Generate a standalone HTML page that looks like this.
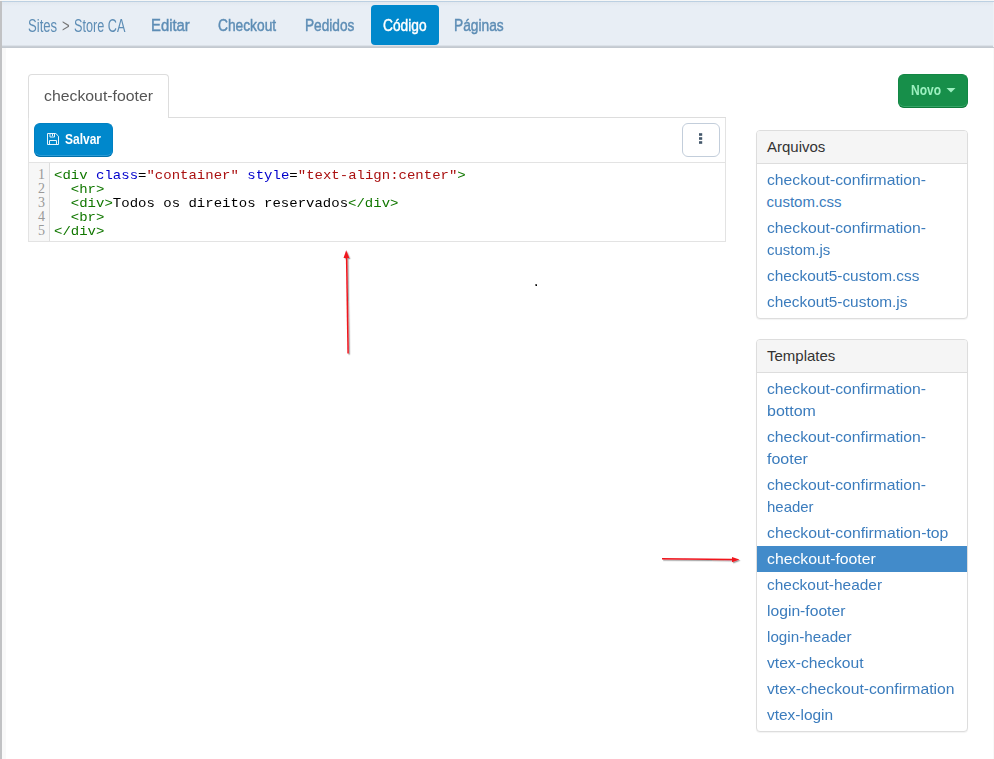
<!DOCTYPE html>
<html><head><meta charset="utf-8">
<style>
*{box-sizing:border-box;margin:0;padding:0}
html,body{width:994px;height:759px;overflow:hidden;background:#fff;font-family:"Liberation Sans",sans-serif;}
body{position:relative}
.abs{position:absolute}
#strip{left:0;top:1px;width:2px;height:758px;background:#c1c2c4}
#strip2{left:2px;top:1px;width:4px;height:758px;background:rgba(0,0,0,.022)}
#toprow{left:0;top:0;width:994px;height:1px;background:#f6f7f7}
#nav{left:2px;top:1px;width:992px;height:47px;background:linear-gradient(to bottom,#bcd0e2 0,#bcd0e2 1px,#e2e8ef 1px,#e8eef5 5px,#e8eef5 44px,#dbe1e8 44px,#dbe1e8 45px,#c8ced5 45px,#c8ced5 46px,#c3c9d0 46px)}
.ni{position:absolute;top:17px;font-size:17.5px;line-height:18px;color:#5d8db5;white-space:nowrap;transform-origin:0 50%;transform:scaleX(.78)}
.nb{-webkit-text-stroke:.45px currentColor;transform:scaleX(.80);font-size:16.8px;top:17.3px}
#pill{left:371px;top:5px;width:68px;height:40px;background:#0088cc;border-radius:4px}
.sx{display:inline-block;white-space:nowrap;transform-origin:0 50%}
#tab{left:28px;top:74px;width:141px;height:44px;border:1px solid #ddd;border-bottom:none;border-radius:4px 4px 0 0;background:#fff}
#tabline{left:168px;top:117px;width:558px;height:1px;background:#ddd}
#tabtxt{left:44px;top:87px;font-size:15px;line-height:18px;color:#555;transform-origin:0 50%;transform:scaleX(1.054);white-space:nowrap}
#panel{left:28px;top:118px;width:698px;height:124px;border:1px solid #e3e3e3;border-top:none}
#tbline{left:29px;top:162px;width:696px;height:1px;background:#e3e3e3}
#salvar{left:34px;top:123px;width:79px;height:34px;background:#0088cc;border-radius:6px;border:1px solid #0080c2;border-bottom:1px solid #0070aa;box-shadow:inset 0 -1px 0 #2a9ad6}
#dots{left:682px;top:123px;width:38px;height:34px;border:1px solid #c3cedb;border-radius:6px;background:#fff}
#gutter{left:29px;top:163px;width:21px;height:78px;background:#f7f7f7;border-right:1px solid #ddd}
.ln{position:absolute;left:28px;width:17px;text-align:right;font-size:14px;line-height:14px;color:#999;font-family:"Liberation Serif",serif}
.cl{position:absolute;left:54px;font-family:"Liberation Mono",monospace;font-size:13px;line-height:14px;white-space:pre;color:#000;transform-origin:0 50%;transform:scaleX(1.0769)}
.t{color:#170}.a{color:#00c}.s{color:#a11}
#novo{left:898px;top:74px;width:70px;height:34px;background:#178f4a;border-radius:6px;border:1px solid #138745;border-bottom:1px solid #0f7a3b;box-shadow:inset 0 -1px 0 #35a566}
.pnl{position:absolute;left:756px;width:212px;border:1px solid #ddd;border-radius:4px;background:#fff;box-shadow:0 1px 1px rgba(0,0,0,.05)}
.ph{height:33px;background:#f5f5f5;border-bottom:1px solid #ddd;border-radius:3px 3px 0 0;font-size:15px;line-height:31px;padding-left:10px;color:#333}
.li{position:absolute;left:766.6px;font-size:15px;line-height:22px;color:#3b7cbd;white-space:nowrap;transform-origin:0 50%;transform:scaleX(1.052)}
#sel{left:757px;top:546px;width:210px;height:26px;background:#428bca}
</style></head><body>
<div id="toprow" class="abs"></div><div id="strip" class="abs"></div><div id="strip2" class="abs"></div>
<div id="nav" class="abs"></div>
<div id="pill" class="abs"></div>
<div class="ni" style="left:28px;transform:scaleX(.75)">Sites</div>
<div class="ni" style="left:61.5px;transform:scaleX(.75);color:#777">&gt;</div>
<div class="ni" style="left:74.3px;transform:scaleX(.725)">Store CA</div>
<div class="ni nb" style="left:151.2px;transform:scaleX(.885)">Editar</div>
<div class="ni nb" style="left:218px;transform:scaleX(.82)">Checkout</div>
<div class="ni nb" style="left:304.8px;transform:scaleX(.815)">Pedidos</div>
<div class="ni nb" style="left:383px;color:#fff;transform:scaleX(.82)">Código</div>
<div class="ni nb" style="left:454.3px;transform:scaleX(.82)">Páginas</div>

<div id="tab" class="abs"></div><div id="tabline" class="abs"></div>
<div id="tabtxt" class="abs">checkout-footer</div>
<div id="panel" class="abs"></div><div id="tbline" class="abs"></div>
<div id="salvar" class="abs"></div>
<div class="abs" style="left:64.7px;top:129.8px;font-size:15px;line-height:18px;font-weight:bold;color:#fff"><span class="sx" style="transform:scaleX(.80)">Salvar</span></div>
<svg class="abs" style="left:47px;top:133px" width="12" height="12" viewBox="0 0 12 12"><path d="M0.5 0.5h8.3l2.7 2.7v8.3h-11z M3 0.5v3.5h4.5v-3.5 M5.5 1v2 M2.5 11.5v-4h7v4" fill="none" stroke="#e6f4fc" stroke-width="1"/></svg>
<div id="dots" class="abs"></div>
<svg class="abs" style="left:699px;top:133px" width="4" height="12" viewBox="0 0 4 12"><rect x="0" y="0.2" width="3.2" height="2.6" fill="#44586b"/><rect x="0" y="4.2" width="3.2" height="2.6" fill="#44586b"/><rect x="0" y="8.2" width="3.2" height="2.6" fill="#44586b"/></svg>
<div id="gutter" class="abs"></div>
<div class="ln" style="top:168.0px">1</div><div class="ln" style="top:182.0px">2</div><div class="ln" style="top:196.0px">3</div><div class="ln" style="top:210.0px">4</div><div class="ln" style="top:224.0px">5</div>
<div class="cl" style="top:168.7px"><span class="t">&lt;div</span> <span class="a">class</span>=<span class="s">"container"</span> <span class="a">style</span>=<span class="s">"text-align:center"</span><span class="t">&gt;</span></div>
<div class="cl" style="top:182.7px">  <span class="t">&lt;hr&gt;</span></div>
<div class="cl" style="top:196.7px">  <span class="t">&lt;div&gt;</span>Todos os direitos reservados<span class="t">&lt;/div&gt;</span></div>
<div class="cl" style="top:210.7px">  <span class="t">&lt;br&gt;</span></div>
<div class="cl" style="top:224.7px"><span class="t">&lt;/div&gt;</span></div>

<div id="novo" class="abs"></div>
<div class="abs" style="left:911px;top:81px;font-size:15px;line-height:18px;font-weight:bold;color:#9cf0c0"><span class="sx" style="transform:scaleX(.8)">Novo</span></div>
<svg class="abs" style="left:946px;top:88px" width="10" height="5" viewBox="0 0 10 5"><path d="M0.5 0h9l-4.5 4.5z" fill="#9cf0c0"/></svg>

<div class="pnl" style="top:130px;height:189px"><div class="ph">Arquivos</div></div>
<div class="li" style="top:169px;transform:scaleX(1.0483)">checkout-confirmation-</div>
<div class="li" style="top:191px;transform:scaleX(1.0000)">custom.css</div>
<div class="li" style="top:217px;transform:scaleX(1.0483)">checkout-confirmation-</div>
<div class="li" style="top:239px;transform:scaleX(0.9992)">custom.js</div>
<div class="li" style="top:265px;transform:scaleX(1.0276)">checkout5-custom.css</div>
<div class="li" style="top:291px;transform:scaleX(1.0276)">checkout5-custom.js</div>

<div class="pnl" style="top:339px;height:393px"><div class="ph">Templates</div></div>
<div id="sel" class="abs"></div>
<div class="li" style="top:378px;transform:scaleX(1.0483)">checkout-confirmation-</div>
<div class="li" style="top:400px;transform:scaleX(1.0643)">bottom</div>
<div class="li" style="top:426px;transform:scaleX(1.0483)">checkout-confirmation-</div>
<div class="li" style="top:448px;transform:scaleX(1.0668)">footer</div>
<div class="li" style="top:474px;transform:scaleX(1.0483)">checkout-confirmation-</div>
<div class="li" style="top:496px;transform:scaleX(0.9976)">header</div>
<div class="li" style="top:522px;transform:scaleX(1.0504)">checkout-confirmation-top</div>
<div class="li" style="top:548px;color:#fff;transform:scaleX(1.0520)">checkout-footer</div>
<div class="li" style="top:574px;transform:scaleX(1.0296)">checkout-header</div>
<div class="li" style="top:600px;transform:scaleX(1.0446)">login-footer</div>
<div class="li" style="top:626px;transform:scaleX(1.0151)">login-header</div>
<div class="li" style="top:652px;transform:scaleX(1.0430)">vtex-checkout</div>
<div class="li" style="top:678px;transform:scaleX(1.0458)">vtex-checkout-confirmation</div>
<div class="li" style="top:704px;transform:scaleX(1.0302)">vtex-login</div>

<svg class="abs" style="left:0;top:0" width="994" height="759" viewBox="0 0 994 759">
<defs><filter id="sh" x="-50%" y="-50%" width="200%" height="200%"><feDropShadow dx="1.2" dy="1.2" stdDeviation="0.6" flood-color="#000" flood-opacity="0.38"/></filter></defs>
<g filter="url(#sh)"><path d="M348.1 353.6L346.6 257" stroke="#f0161f" stroke-width="1.5" fill="none"/>
<path d="M346.2 250.2L343.5 258L349.3 258z" fill="#f0161f"/></g>
<g filter="url(#sh)"><path d="M662 558.7L733 559.5" stroke="#f0161f" stroke-width="1.5" fill="none"/>
<path d="M739.4 559.6L732 556.9L732 562.3z" fill="#f0161f"/></g>
<rect x="535" y="284" width="2" height="2" fill="#777"/><rect x="536" y="285" width="1" height="1" fill="#000"/><rect x="536" y="284" width="1" height="1" fill="#444"/>
<rect x="993" y="48" width="1" height="711" fill="#f9f9f9"/><rect x="993" y="2" width="1" height="45" fill="#edf1f6"/>
</svg>
</body></html>
